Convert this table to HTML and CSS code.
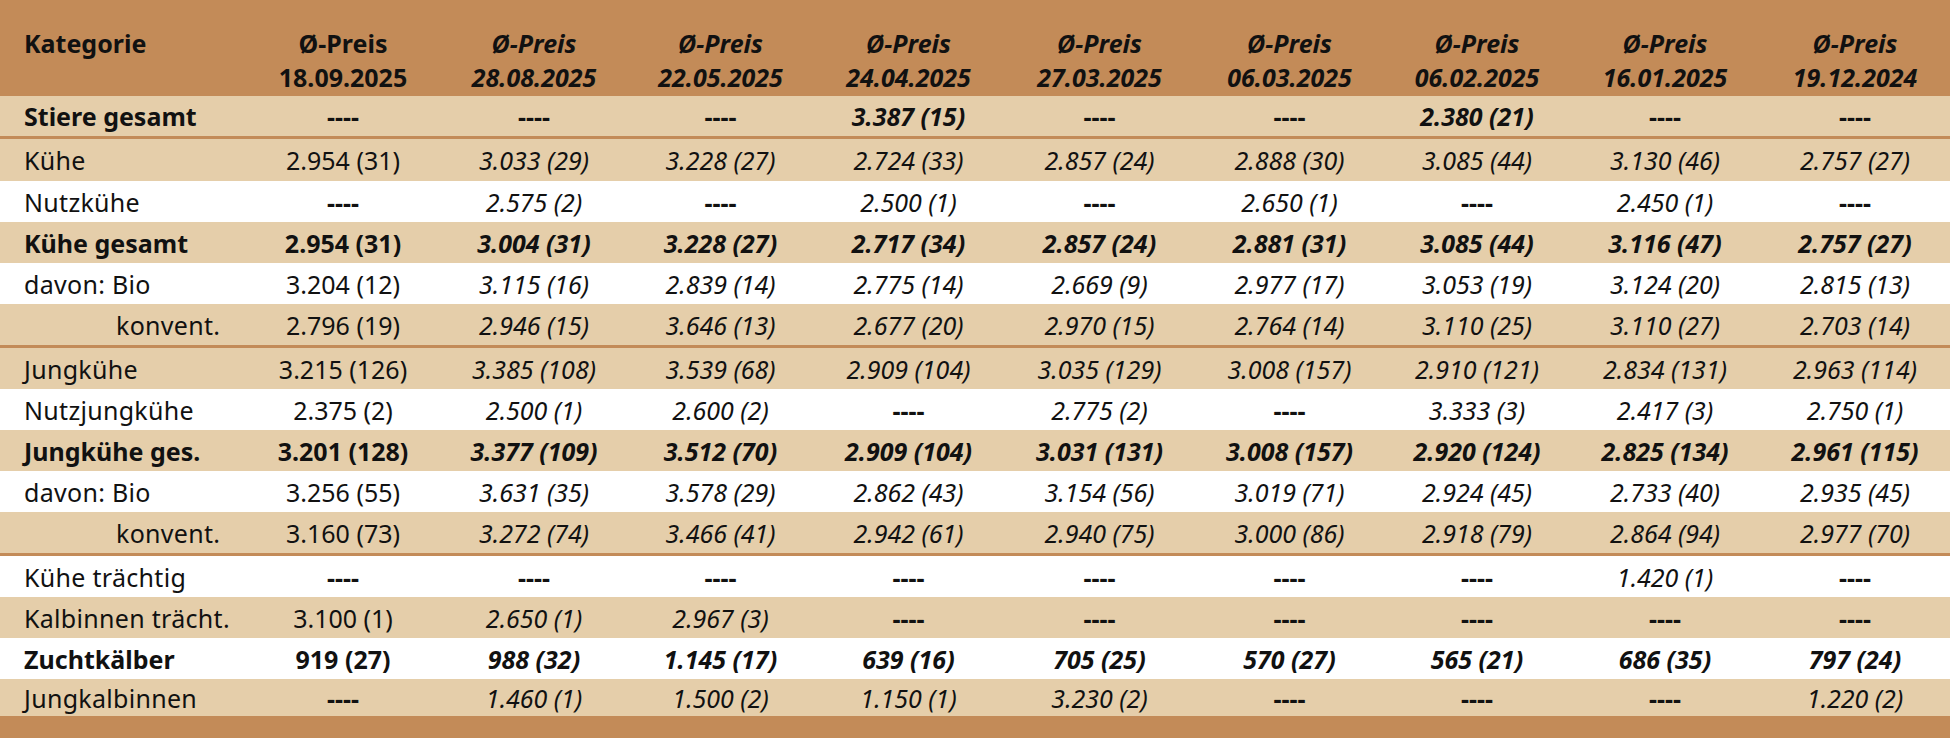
FILE: index.html
```html
<!DOCTYPE html>
<html lang="de">
<head>
<meta charset="utf-8">
<title>Preise</title>
<link rel="stylesheet" href="styles.css">
</head>
<body>
<table class="prices">
  <colgroup>
    <col class="c-cat"><col class="c1"><col class="c2"><col class="c3"><col class="c4"><col class="c5"><col class="c6"><col class="c7"><col class="c8"><col class="c9">
  </colgroup>
  <thead>
    <tr class="head">
      <th class="cat">Kategorie</th>
      <th class="cur">Ø-Preis<br>18.09.2025</th>
      <th>Ø-Preis<br>28.08.2025</th>
      <th>Ø-Preis<br>22.05.2025</th>
      <th>Ø-Preis<br>24.04.2025</th>
      <th>Ø-Preis<br>27.03.2025</th>
      <th>Ø-Preis<br>06.03.2025</th>
      <th>Ø-Preis<br>06.02.2025</th>
      <th>Ø-Preis<br>16.01.2025</th>
      <th>Ø-Preis<br>19.12.2024</th>
    </tr>
  </thead>
  <tbody>
    <tr class="beige bold sep r40">
      <td class="cat">Stiere gesamt</td>
      <td class="cur"><span class="dash">----</span></td><td><span class="dash">----</span></td><td><span class="dash">----</span></td><td>3.387 (15)</td><td><span class="dash">----</span></td><td><span class="dash">----</span></td><td>2.380 (21)</td><td><span class="dash">----</span></td><td><span class="dash">----</span></td>
    </tr>
    <tr class="beige r42">
      <td class="cat">Kühe</td>
      <td class="cur">2.954 (31)</td><td>3.033 (29)</td><td>3.228 (27)</td><td>2.724 (33)</td><td>2.857 (24)</td><td>2.888 (30)</td><td>3.085 (44)</td><td>3.130 (46)</td><td>2.757 (27)</td>
    </tr>
    <tr class="white">
      <td class="cat">Nutzkühe</td>
      <td class="cur"><span class="dash">----</span></td><td>2.575 (2)</td><td><span class="dash">----</span></td><td>2.500 (1)</td><td><span class="dash">----</span></td><td>2.650 (1)</td><td><span class="dash">----</span></td><td>2.450 (1)</td><td><span class="dash">----</span></td>
    </tr>
    <tr class="beige bold">
      <td class="cat">Kühe gesamt</td>
      <td class="cur">2.954 (31)</td><td>3.004 (31)</td><td>3.228 (27)</td><td>2.717 (34)</td><td>2.857 (24)</td><td>2.881 (31)</td><td>3.085 (44)</td><td>3.116 (47)</td><td>2.757 (27)</td>
    </tr>
    <tr class="white">
      <td class="cat">davon: Bio</td>
      <td class="cur">3.204 (12)</td><td>3.115 (16)</td><td>2.839 (14)</td><td>2.775 (14)</td><td>2.669 (9)</td><td>2.977 (17)</td><td>3.053 (19)</td><td>3.124 (20)</td><td>2.815 (13)</td>
    </tr>
    <tr class="beige sep">
      <td class="cat indent">konvent.</td>
      <td class="cur">2.796 (19)</td><td>2.946 (15)</td><td>3.646 (13)</td><td>2.677 (20)</td><td>2.970 (15)</td><td>2.764 (14)</td><td>3.110 (25)</td><td>3.110 (27)</td><td>2.703 (14)</td>
    </tr>
    <tr class="beige">
      <td class="cat">Jungkühe</td>
      <td class="cur">3.215 (126)</td><td>3.385 (108)</td><td>3.539 (68)</td><td>2.909 (104)</td><td>3.035 (129)</td><td>3.008 (157)</td><td>2.910 (121)</td><td>2.834 (131)</td><td>2.963 (114)</td>
    </tr>
    <tr class="white">
      <td class="cat">Nutzjungkühe</td>
      <td class="cur">2.375 (2)</td><td>2.500 (1)</td><td>2.600 (2)</td><td><span class="dash">----</span></td><td>2.775 (2)</td><td><span class="dash">----</span></td><td>3.333 (3)</td><td>2.417 (3)</td><td>2.750 (1)</td>
    </tr>
    <tr class="beige bold">
      <td class="cat">Jungkühe ges.</td>
      <td class="cur">3.201 (128)</td><td>3.377 (109)</td><td>3.512 (70)</td><td>2.909 (104)</td><td>3.031 (131)</td><td>3.008 (157)</td><td>2.920 (124)</td><td>2.825 (134)</td><td>2.961 (115)</td>
    </tr>
    <tr class="white">
      <td class="cat">davon: Bio</td>
      <td class="cur">3.256 (55)</td><td>3.631 (35)</td><td>3.578 (29)</td><td>2.862 (43)</td><td>3.154 (56)</td><td>3.019 (71)</td><td>2.924 (45)</td><td>2.733 (40)</td><td>2.935 (45)</td>
    </tr>
    <tr class="beige sep">
      <td class="cat indent">konvent.</td>
      <td class="cur">3.160 (73)</td><td>3.272 (74)</td><td>3.466 (41)</td><td>2.942 (61)</td><td>2.940 (75)</td><td>3.000 (86)</td><td>2.918 (79)</td><td>2.864 (94)</td><td>2.977 (70)</td>
    </tr>
    <tr class="white">
      <td class="cat">Kühe trächtig</td>
      <td class="cur"><span class="dash">----</span></td><td><span class="dash">----</span></td><td><span class="dash">----</span></td><td><span class="dash">----</span></td><td><span class="dash">----</span></td><td><span class="dash">----</span></td><td><span class="dash">----</span></td><td>1.420 (1)</td><td><span class="dash">----</span></td>
    </tr>
    <tr class="beige">
      <td class="cat">Kalbinnen trächt.</td>
      <td class="cur">3.100 (1)</td><td>2.650 (1)</td><td>2.967 (3)</td><td><span class="dash">----</span></td><td><span class="dash">----</span></td><td><span class="dash">----</span></td><td><span class="dash">----</span></td><td><span class="dash">----</span></td><td><span class="dash">----</span></td>
    </tr>
    <tr class="white bold">
      <td class="cat">Zuchtkälber</td>
      <td class="cur">919 (27)</td><td>988 (32)</td><td>1.145 (17)</td><td>639 (16)</td><td>705 (25)</td><td>570 (27)</td><td>565 (21)</td><td>686 (35)</td><td>797 (24)</td>
    </tr>
    <tr class="beige r37">
      <td class="cat">Jungkalbinnen</td>
      <td class="cur"><span class="dash">----</span></td><td>1.460 (1)</td><td>1.500 (2)</td><td>1.150 (1)</td><td>3.230 (2)</td><td><span class="dash">----</span></td><td><span class="dash">----</span></td><td><span class="dash">----</span></td><td>1.220 (2)</td>
    </tr>
  </tbody>
  <tfoot>
    <tr class="foot"><td colspan="10"></td></tr>
  </tfoot>
</table>
</body>
</html>
```

FILE: styles.css
```css
html, body {
  margin: 0;
  padding: 0;
  background: #ffffff;
}

.prices {
  width: 1950px;
  border-collapse: separate;
  border-spacing: 0;
  table-layout: fixed;
  font-family: "Noto Sans", "Open Sans", sans-serif;
  font-size: 25px;
  color: #111111;
}

.c-cat { width: 246px; }
.c1 { width: 194px; }
.c2 { width: 188px; }
.c3 { width: 185px; }
.c4 { width: 191px; }
.c5 { width: 191px; }
.c6 { width: 189px; }
.c7 { width: 186px; }
.c8 { width: 190px; }
.c9 { width: 190px; }

.prices th,
.prices td {
  padding: 0;
  text-align: center;
  font-style: italic;
  font-weight: 400;
  white-space: nowrap;
}

.prices .cur { font-style: normal; }

.prices .cat {
  text-align: left;
  font-style: normal;
  padding-left: 24px;
}

.prices tbody td.cat { letter-spacing: 0.3px; }
.prices tbody .bold td.cat { letter-spacing: 0; }

.prices .indent { padding-left: 116px; }

.head {
  background: #c38b58;
}

.head th {
  font-weight: 700;
  line-height: 34px;
  vertical-align: top;
  padding-top: 26px;
  padding-bottom: 2px;
}

.prices tbody td {
  line-height: 34px;
  padding-top: 4px;
  padding-bottom: 3px;
}

.prices tbody tr.r40 td { padding-top: 3px; padding-bottom: 3px; }
.prices tbody tr.r42 td { padding-top: 4px; padding-bottom: 4px; }
.prices tbody tr.r37 td { padding-top: 2px; padding-bottom: 1px; }

.beige { background: #e5ceaa; }
.white { background: #ffffff; }

.bold td { font-weight: 700; }

.sep td { border-bottom: 3px solid #c38b58; }

.dash {
  font-weight: 700;
  font-style: normal;
}

.foot { background: #c38b58; }
.foot td { padding: 0; height: 22px; }
```
